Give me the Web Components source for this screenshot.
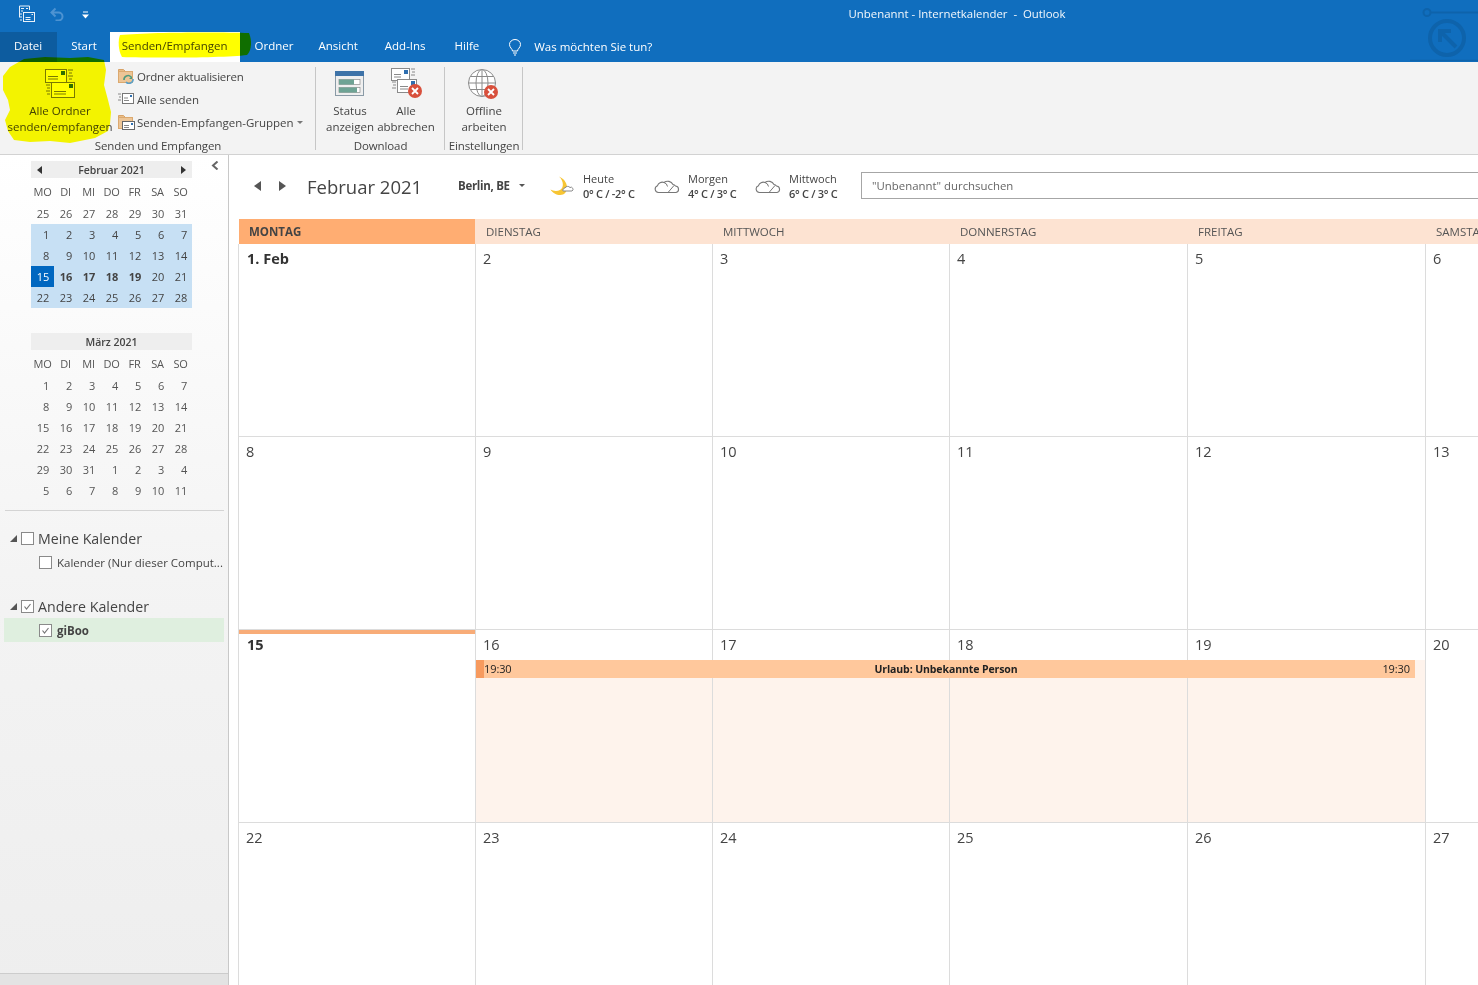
<!DOCTYPE html>
<html lang="de"><head><meta charset="utf-8"><title>Outlook</title>
<style>
html,body{margin:0;height:100%;overflow:hidden;background:#fff}
body{font:11.5px "Open Sans","Liberation Sans",sans-serif;color:#444}
</style></head><body>
<ol-app></ol-app>
<script>
const I={
env:(x,y,w,h,st='#7a7a7a')=>`<rect x="${x+.5}" y="${y+.5}" width="${w}" height="${h}" fill="#fff" stroke="${st}"/><rect x="${x+w-5}" y="${y+2}" width="4" height="4" fill="#2f6fb0"/><path d="M${x+3} ${y+h-5.5}h${w-11}M${x+3} ${y+h-3}h${w-11}" stroke="${st}"/>`,
x:(cx,cy)=>`<circle cx="${cx}" cy="${cy}" r="7" fill="#d8503c"/><path d="M${cx-3} ${cy-3}l6 6M${cx+3} ${cy-3}l-6 6" stroke="#fff" stroke-width="1.8"/>`,
folder:`<path d="M.5 5.5v-3h5l2 2h7v3" fill="#e9bd87" stroke="#d8a368"/><rect x=".5" y="4.5" width="14" height="11" fill="#edc596" stroke="#dba96f"/>`
};
const ICONS={
sendall:`<svg width="32" height="30" viewBox="0 0 32 30"><g fill="none">${I.env(1,0,21,13)}<path d="M24 1h5M25 4h3M24 7h5M25 10h3" stroke="#777"/></g><g>${I.env(7,13,23,15)}<path d="M2 16h4M3 19h3M2 22h4M3 25h3" stroke="#777"/></g></svg>`,
refresh:`<svg width="17" height="17" viewBox="0 0 17 17">${I.folder}<path d="M6 13a4 4 0 0 1 7-3" fill="none" stroke="#4f9a7d" stroke-width="1.6"/><path d="M14 9v3h-3z" fill="#4f9a7d"/><path d="M15 12a4 4 0 0 1-7 3" fill="none" stroke="#5aa0c8" stroke-width="1.6"/></svg>`,
sendsmall:`<svg width="17" height="15" viewBox="0 0 17 15"><rect x="4.5" y="2.5" width="11" height="10" fill="#fff" stroke="#777"/><rect x="12" y="4" width="2" height="2" fill="#2f6fb0"/><path d="M6 7h4M6 9.5h5" stroke="#888"/><path d="M0 3h3M1 6h2M0 9h3" stroke="#888"/></svg>`,
groups:`<svg width="17" height="17" viewBox="0 0 17 17">${I.folder}<rect x="4.5" y="8.5" width="12" height="8" fill="#fff" stroke="#666"/><rect x="13" y="10" width="2" height="2" fill="#2f6fb0"/><path d="M6 12.5h5M6 14.5h5" stroke="#888"/></svg>`,
status:`<svg width="30" height="26" viewBox="0 0 30 26"><rect x=".5" y=".5" width="28" height="24" fill="#efefef" stroke="#8a9aa6"/><rect width="29" height="5" fill="#3e73a8"/><rect x="4" y="8.500" width="21" height="5" fill="#fff" stroke="#8a8a8a" stroke-width=".7"/><rect x="4" y="8.500" width="15" height="5" fill="#6ea394"/><rect x="4" y="16.500" width="21" height="5" fill="#fff" stroke="#8a8a8a" stroke-width=".7"/><rect x="4" y="16.500" width="18" height="5" fill="#6ea394"/></svg>`,
cancel:`<svg width="33" height="31" viewBox="0 0 33 31">${I.env(1,0,18,12,'#8a8a8a')}<path d="M21 1h4M22 4h3M21 7h4" stroke="#888"/>${I.env(7,11,19,13,'#8a8a8a')}<path d="M2 14h4M3 17h3M2 20h4" stroke="#888"/>${I.x(25,23)}</svg>`,
globe:`<svg width="33" height="31" viewBox="0 0 33 31"><g fill="#fff" stroke="#8a8a8a"><circle cx="15" cy="14" r="13.5"/><ellipse cx="15" cy="14" rx="6" ry="13.5"/><path d="M15 .5v27M1.5 14h27M3.5 7.5h23M3.5 20.5h23" fill="none"/></g>${I.x(24,23)}</svg>`,
moon:`<svg width="24" height="20" viewBox="0 0 24 20"><path d="M9 .5C14 5 14 12 10 14C7 15.500 3 15 .5 13.500C3 18 9 20 13 18.500C19 16 19 5 9 .5z" fill="#f7c533"/><path d="M13 15a2.200 2.200 0 0 1 2-3a3 3 0 0 1 5-.5a2 2 0 0 1 2 3.500h-8.500z" fill="#fff" stroke="#8a8a8a"/></svg>`,
cloud:`<svg width="26" height="16" viewBox="0 0 26 16"><path d="M4.500 14.500a3.500 3.500 0 0 1-1-6.800a5 5 0 0 1 6.500-3.200a6 6 0 0 1 9 2a3.500 3.500 0 0 1 2.500 1.500a3.300 3.300 0 0 1 .5 6.500z" fill="#fff" stroke="#777" stroke-width="1.100"/><path d="M10 4.500a5 5 0 0 1 3.500 4M14 14.500l6-7" fill="none" stroke="#777"/></svg>`,
qat:`<svg width="17" height="18" viewBox="0 0 17 18" fill="none" stroke="#e9f1f9"><path d="M1.500 12v-11h10v4M3 3.500h3M3 6h2M8 3.500h2"/><rect x="5.500" y="7.500" width="11" height="9" fill="#106ebe"/><path d="M7.500 12.500h5M7.500 14.500h5M13.500 9.500h1.500M1 9h3M1 12h3M2 15h2"/></svg>`,
undo:`<svg width="15" height="14" viewBox="0 0 15 14" fill="none" stroke="#4d93d2" stroke-width="2"><path d="M1.500 5.500h7a4 4 0 0 1 0 8h-3M5.500 1.500l-4 4 4 4"/></svg>`,
qatmore:`<svg width="7" height="8" viewBox="0 0 7 8"><path d="M1 1h5" stroke="#fff"/><path d="M0 3.500h7l-3.500 4z" fill="#fff"/></svg>`,
bulb:`<svg width="14" height="17" viewBox="0 0 14 17" fill="none" stroke="#fff"><path d="M4.500 12c0-2-3-3.500-3-6.500a5.500 5 0 0 1 11 0c0 3-3 4.500-3 6.500zM5 14h4M6 16h2"/></svg>`
};
function def(name,css,html,init){customElements.define(name,class extends HTMLElement{
 constructor(){super();this.attachShadow({mode:'open'})}
 connectedCallback(){this.shadowRoot.innerHTML=`<style>${css}</style>`+(typeof html==='function'?html(this):html);init&&init(this)}
})}
const attr=(e,a,d='')=>e.getAttribute(a)??d;

def('ol-titlebar',`:host{display:flex;align-items:center;height:32px;background:#106ebe;color:#f4f8fc;position:relative;flex:none;font-size:11.400px}
.q{display:flex;align-items:center;position:absolute;left:18px;top:4px;height:20px}.u{margin-left:15px;display:flex}.m{margin-left:17px;margin-top:1px;display:flex}
.t{flex:1;text-align:center;padding:0 0 6px 436px;white-space:pre}`,
`<div class="q">${ICONS.qat}<span class="u">${ICONS.undo}</span><span class="m">${ICONS.qatmore}</span></div><div class="t">Unbenannt - Internetkalender  -  Outlook</div>`);

def('ol-tab',`:host{display:block;height:30px;line-height:28px;padding:0 13px;color:#fff;white-space:nowrap}
:host([file]){background:#0d5c9f;padding:0 15px 0 14px}
:host([wide]){padding:0 13px 0 14px}
:host([active]){background:#fff;color:#444;padding:0 12px 0 12px}`,`<slot></slot>`);

def('ol-tabs',`:host{display:flex;height:30px;background:#106ebe;flex:none;align-items:center;position:relative}
.b{display:flex;align-items:center;gap:12px;color:#fff;margin-left:16px}.b span{margin-top:-2px}`,
`<slot></slot><div class="b">${ICONS.bulb}<span>Was möchten Sie tun?</span></div>`);

def('ol-big',`:host{display:flex;flex-direction:column;align-items:center;text-align:center;line-height:16px;color:#444;white-space:nowrap}
.i{height:41px;display:flex;align-items:flex-end;box-sizing:border-box}`,
`<div class="i"><slot name="i"></slot></div><slot></slot>`);
def('ol-small',`:host{display:flex;align-items:center;height:23px;white-space:nowrap;color:#444;gap:3px}.i{width:16px;display:flex}`,
`<div class="i"><slot name="i"></slot></div><slot></slot>`);
def('ol-group',`:host{display:flex;flex-direction:column;align-items:center;height:92px;box-sizing:border-box;background:linear-gradient(#c6c6c6,#c6c6c6) right 5px/1px 83px no-repeat;flex:none}
.c{flex:1;display:flex;min-height:0;width:100%;box-sizing:border-box}.l{height:16px;line-height:16px;color:#444;white-space:nowrap;letter-spacing:-.1px}`,
e=>`<div class="c" style="${attr(e,'cs')}"><slot></slot></div><div class="l">${attr(e,'label')}</div>`);

def('ol-ribbon',`:host{display:flex;height:93px;background:#f3f3f3;border-bottom:1px solid #d2d2d2;box-sizing:border-box;flex:none;position:relative}`,`<slot></slot>`);

def('ol-minical',`:host{display:block;width:161px;margin-left:31px;font-size:11px;color:#555}
.h{height:17px;background:#eee;display:flex;align-items:center;justify-content:space-between;padding:0 6px;font-weight:600;color:#444;font-size:10.500px}
.h i{width:0;height:0;border:4px solid transparent}.h i.l{border-right:5px solid #333;border-left:0}.h i.r{border-left:5px solid #333;border-right:0}
.g{display:grid;grid-template-columns:repeat(7,23px)}
.d{height:21px;line-height:21px;text-align:right;padding-right:5px;box-sizing:border-box;letter-spacing:-.2px}
.w{height:25px;line-height:27px;text-align:center;padding:0;letter-spacing:-.2px}
.c{background:#c7e0f4;color:#444}.t{background:#0067c0;color:#fff}.b{font-weight:700}`,
e=>{const w=['MO','DI','MI','DO','FR','SA','SO'];const cells=JSON.parse(attr(e,'days'));const s=+attr(e,'sel',-1);
return `<div class="h"><i class="${e.hasAttribute('nav')?'l':''}"></i><span>${attr(e,'title')}</span><i class="${e.hasAttribute('nav')?'r':''}"></i></div><div class="g">${w.map(x=>`<div class="d w">${x}</div>`).join('')}${cells.map((d,i)=>{let c='d';if(s>=0&&i>=7&&i<35)c+=' c';if(i===s)c+=' t';if(s>=0&&i>s&&i<=s+4)c+=' b';return `<div class="${c}">${d}</div>`}).join('')}</div>`});

def('ol-check',`:host{display:inline-block;width:13px;height:13px;border:1px solid #8a8a8a;background:#fff;box-sizing:border-box;flex:none}svg{display:block}`,
e=>e.hasAttribute('on')?`<svg width="11" height="11" viewBox="0 0 11 11" fill="none" stroke="#777" stroke-width="1.200"><path d="M2.500 5.500l2 2.500 4-5"/></svg>`:'');

def('ol-calgroup',`:host{display:flex;align-items:center;height:24px;font-size:14.200px;color:#444;padding-left:10px}
i{width:0;height:0;border-style:solid;border-width:0 0 7px 7px;border-color:transparent transparent #555 transparent;margin-right:4px}
ol-check{margin-right:4px}`,e=>`<i></i><ol-check ${e.hasAttribute('on')?'on':''}></ol-check><slot></slot>`);
def('ol-calitem',`:host{display:flex;align-items:center;height:24px;padding-left:35px;margin:0 4px;color:#444;white-space:nowrap;overflow:hidden}
:host([sel]){background:#dfefdf;font-weight:700}ol-check{margin-right:5px}`,e=>`<ol-check ${e.hasAttribute('on')?'on':''}></ol-check><slot></slot>`);

def('ol-sidebar',`:host{display:block;width:229px;flex:none;box-sizing:border-box;border-right:1px solid #c8c8c8;background:linear-gradient(#fff,#f3f3f3 55%,#eee);padding-top:6px;position:relative;overflow:hidden}
svg{position:absolute;left:211px;top:6px}
.foot{position:absolute;left:0;right:0;bottom:0;height:12px;background:#e3e3e3;border-top:1px solid #ccc;box-sizing:border-box}`,
`<svg width="8" height="9" viewBox="0 0 8 9"><path d="M6.500 .5L2 4.500l4.500 4" fill="none" stroke="#666" stroke-width="2"/></svg><slot></slot><div class="foot"></div>`);

def('ol-weather',`:host{display:flex;align-items:center;font-size:11px;line-height:15px;color:#444;white-space:nowrap}.i{display:flex;margin-right:8px}b{font-weight:600;display:block;letter-spacing:-.3px}`,
e=>`<div class="i" style="${attr(e,'is')}">${ICONS[attr(e,'icon')]}</div><div style="width:${attr(e,'w')}px"><div>${attr(e,'a')}</div><b>${attr(e,'b')}</b></div>`);

def('ol-toolbar',`:host{display:flex;align-items:center;height:64px;padding:0 0 3px 25px;flex:none;width:1300px;box-sizing:border-box}
i{width:0;height:0;border:5px solid transparent}.l{border-right:7px solid #555;border-left:0;margin-right:18px}.r{border-left:7px solid #555;border-right:0;margin-right:21px}
.m{font-size:18.500px;width:151px;color:#444;white-space:nowrap;margin-top:2px}.c{font-weight:700;color:#444;width:92px;letter-spacing:-.3px;display:flex;align-items:center;gap:9px;white-space:nowrap}
.c s{border:3px solid transparent;border-top:3px solid #555;margin-top:3px}
.s{margin-left:23px;width:640px;height:27px;box-sizing:border-box;border:1px solid #a6a6a6;line-height:25px;padding-left:10px;color:#666;white-space:nowrap;background:#fff;font-size:11.400px}`,
`<i class="l"></i><i class="r"></i><div class="m">Februar 2021</div><div class="c">Berlin, BE<s></s></div><slot></slot><div class="s">"Unbenannt" durchsuchen</div>`);

def('ol-month',`:host{display:block;margin-left:9px;width:1300px;position:relative;flex:1;overflow:hidden}
.hd{display:grid;grid-template-columns:236px 237px 237px 238px 238px 238px;margin-left:1px}
.wk{display:grid;grid-template-columns:238px 237px 237px 238px 238px 238px}
.hd>div{height:25px;line-height:25px;background:#fde3d2;color:#555;padding-left:11px;white-space:nowrap;overflow:hidden}
.hd>.now{background:#ffad72;font-weight:700;color:#444;padding-left:10px}
.wk{height:193px;position:relative}
.cell{border-right:1px solid #dcdcdc;border-bottom:1px solid #dcdcdc;box-sizing:border-box;display:flex;flex-direction:column;min-width:0}
.cell:first-child{border-left:1px solid #dcdcdc}
.n{height:30px;padding:4px 0 0 7px;box-sizing:border-box;font-size:14.500px;line-height:22px;color:#444;white-space:nowrap}
.cell.b .n{font-weight:700;color:#333;padding-left:8px}
.cell.today::before{content:"";height:4px;background:#f8ac78;flex:none}
.cell.today .n{height:26px;padding-top:0;padding-left:8px}
.tint{flex:1;background:#fef3ec}
.ev{position:absolute;left:238px;width:939px;top:30px;height:18px;background:#ffc89c;border-left:8px solid #f79a5e;box-sizing:border-box;display:flex;align-items:center;justify-content:space-between;font-size:11px;color:#222;padding:0 5px 2px 0;letter-spacing:-.1px}
.ev b{font-weight:700;position:relative;top:1px;left:-1px;font-size:10.500px}`,
()=>{const names=['MONTAG','DIENSTAG','MITTWOCH','DONNERSTAG','FREITAG','SAMSTAG'];
const wk=[['1. Feb',2,3,4,5,6],[8,9,10,11,12,13],[15,16,17,18,19,20],[22,23,24,25,26,27]];
return `<div class="hd">${names.map((n,i)=>`<div class="${i?'':'now'}">${n}</div>`).join('')}</div>`+
wk.map((r,ri)=>`<div class="wk">${r.map((d,i)=>{let c='cell';if(i===0&&ri!==1&&ri!==3)c+=' b';if(ri===2&&i===0)c+=' today';const t=ri===2&&i>=1&&i<=4;return `<div class="${c}"><div class="n">${d}</div>${t?'<div class="tint"></div>':''}</div>`}).join('')}${ri===2?`<div class="ev"><span>19:30</span><b>Urlaub: Unbekannte Person</b><span>19:30</span></div>`:''}</div>`).join('')});

def('ol-app',`:host{display:flex;flex-direction:column;width:1478px;height:985px;position:relative;overflow:hidden}
.body{display:flex;flex:1;min-height:0}.main{flex:1;display:flex;flex-direction:column;min-width:0;overflow:hidden}
.deco{position:absolute;right:0;top:0;pointer-events:none}
.mark{position:absolute;left:0;top:0;mix-blend-mode:multiply;pointer-events:none}`,
`<ol-titlebar></ol-titlebar>
<ol-tabs>
 <ol-tab file>Datei</ol-tab><ol-tab wide>Start</ol-tab><ol-tab active>Senden/Empfangen</ol-tab><ol-tab style="margin-left:2px">Ordner</ol-tab><ol-tab style="margin-left:-1px">Ansicht</ol-tab><ol-tab style="margin-left:1px">Add-Ins</ol-tab><ol-tab style="margin-left:3px">Hilfe</ol-tab>
</ol-tabs>
<ol-ribbon>
 <ol-group label="Senden und Empfangen" style="width:316px" cs="padding-left:8px">
  <ol-big style="width:104px"><span slot="i">${ICONS.sendall}</span>Alle Ordner<br>senden/empfangen</ol-big>
  <div style="margin:3px 0 0 6px"><ol-small style="letter-spacing:-.2px"><span slot="i">${ICONS.refresh}</span>Ordner aktualisieren</ol-small><ol-small><span slot="i">${ICONS.sendsmall}</span>Alle senden</ol-small><ol-small><span slot="i">${ICONS.groups}</span>Senden-Empfangen-Gruppen <svg width="7" height="4" viewBox="0 0 7 4" style="margin-top:1px"><path d="M0 0h6l-3 3z" fill="#777"/></svg></ol-small></div>
 </ol-group>
 <ol-group label="Download" style="width:129px" cs="padding-left:9px">
  <ol-big style="width:50px"><span slot="i" style="margin-bottom:2px">${ICONS.status}</span>Status<br>anzeigen</ol-big>
  <ol-big style="width:62px"><span slot="i">${ICONS.cancel}</span>Alle<br>abbrechen</ol-big>
 </ol-group>
 <ol-group label="Einstellungen" style="width:78px" cs="justify-content:center">
  <ol-big><span slot="i" style="margin-bottom:-1px">${ICONS.globe}</span>Offline<br>arbeiten</ol-big>
 </ol-group>
</ol-ribbon>
<div class="body">
 <ol-sidebar>
  <ol-minical nav title="Februar 2021" sel="21" days='[25,26,27,28,29,30,31,1,2,3,4,5,6,7,8,9,10,11,12,13,14,15,16,17,18,19,20,21,22,23,24,25,26,27,28]'></ol-minical>
  <div style="height:25px"></div>
  <ol-minical title="März 2021" days='[1,2,3,4,5,6,7,8,9,10,11,12,13,14,15,16,17,18,19,20,21,22,23,24,25,26,27,28,29,30,31,1,2,3,4,5,6,7,8,9,10,11]'></ol-minical>
  <div style="height:9px"></div><div style="height:1px;background:#d4d4d4;margin:0 4px 0 5px"></div><div style="height:15px"></div>
  <ol-calgroup>Meine Kalender</ol-calgroup>
  <ol-calitem>Kalender (Nur dieser Comput...</ol-calitem>
  <div style="height:20px"></div>
  <ol-calgroup on>Andere Kalender</ol-calgroup>
  <ol-calitem on sel>giBoo</ol-calitem>
 </ol-sidebar>
 <div class="main">
  <ol-toolbar>
   <ol-weather icon="moon" a="Heute" b="0° C / -2° C" w="52" is="margin-right:9px"></ol-weather>
   <ol-weather icon="cloud" a="Morgen" b="4° C / 3° C" w="47" style="margin-left:19px"></ol-weather>
   <ol-weather icon="cloud" a="Mittwoch" b="6° C / 3° C" w="49" style="margin-left:20px"></ol-weather>
  </ol-toolbar>
  <ol-month></ol-month>
 </div>
</div>
<svg class="deco" width="80" height="62" viewBox="0 0 80 62" fill="none" stroke="#0e63ab"><circle cx="29" cy="12.500" r="3.500" stroke-width="2"/><path d="M33 12.500h47" stroke-width="2"/><circle cx="49" cy="38" r="17" stroke-width="4"/><path d="M58 47l-14-14M42 42V31h11" stroke-width="4"/><path d="M12 60.500h68" stroke-width="1.500"/></svg>
<svg class="mark" width="260" height="150" viewBox="0 0 260 150"><path fill="#ffff00" d="M24 59L45 57L70 58L88 57L104 60L106 70L104 85L108 100L111 112L110 124L108 131L95 138L70 143L50 141L30 142L14 140L8 131L5 120L10 110L8 100L3 90L3 76L10 67Z"/><path fill="#ffff00" d="M120 35C150 32 220 32 249 33C252 40 252 50 247 55C225 58 150 58 122 57C118 50 118 40 120 35Z"/></svg>`);
</script></body></html>
